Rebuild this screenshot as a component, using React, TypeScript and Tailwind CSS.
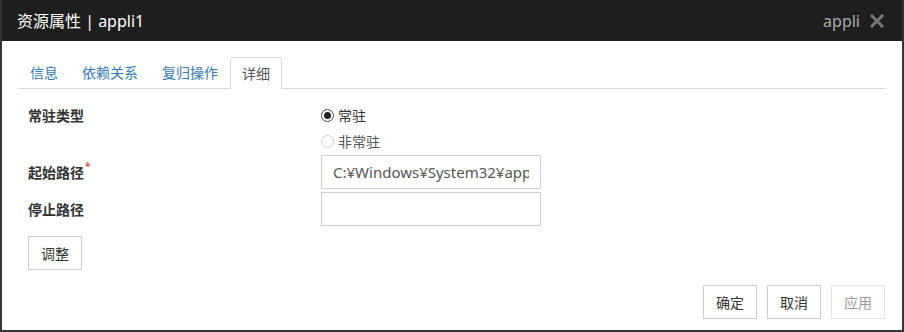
import React from "react";

const App = () => {
  const [mode, setMode] = React.useState<"resident" | "nonresident">("resident");
  const tabs = ["信息", "依赖关系", "复归操作", "详细"];
  const active = 3;

  return (
    <div
      className="w-[904px] h-[332px] border-2 border-t-0 border-[#333] bg-white flex flex-col text-[14px] text-[#333]"
      style={{ fontFamily: '"Noto Sans", "Noto Sans CJK SC", sans-serif' }}
    >
      <div className="h-[41px] bg-[#1e1e1e] flex items-center justify-between pl-[15px] pr-[18px] shrink-0">
        <span className="text-white text-[16px]">资源属性 | appli1</span>
        <div className="flex items-center gap-[10px]">
          <span className="text-[#aaa] text-[16px]">appli</span>
          <svg width="14" height="14" viewBox="0 0 14 14">
            <path d="M2 2 L12 12 M12 2 L2 12" stroke="#777" strokeWidth="3" strokeLinecap="square" />
          </svg>
        </div>
      </div>

      <div className="flex-1 flex flex-col px-[16px] pt-[16px] pb-[11px]">
        <div className="flex border-b border-[#ddd] h-[32px]">
          {tabs.map((t, i) => (
            <div
              key={t}
              className={
                i === active
                  ? "px-[11px] h-[32px] flex items-center border border-[#ddd] border-b-white bg-white text-[#555] rounded-t-[3px]"
                  : "px-[11px] h-[31px] flex items-center border border-transparent text-[#337ab7]"
              }
            >
              {t}
            </div>
          ))}
        </div>

        <div className="pl-[10px] pt-[13px] grid grid-cols-[293px_1fr]">
          <div className="h-[26px] flex items-center font-bold">常驻类型</div>
          <label className="h-[26px] flex items-center gap-[4px] cursor-pointer" onClick={() => setMode("resident")}>
            <span
              className={
                mode === "resident"
                  ? "w-[13px] h-[13px] rounded-full border border-[#444] flex items-center justify-center"
                  : "w-[13px] h-[13px] rounded-full border border-[#ccc]"
              }
            >
              {mode === "resident" && <span className="w-[7px] h-[7px] rounded-full bg-[#222]" />}
            </span>
            <span className={mode === "resident" ? "text-[#333]" : "text-[#555]"}>常驻</span>
          </label>

          <div className="h-[27px]" />
          <label className="h-[27px] flex items-center gap-[4px] cursor-pointer" onClick={() => setMode("nonresident")}>
            <span
              className={
                mode === "nonresident"
                  ? "w-[13px] h-[13px] rounded-full border border-[#444] flex items-center justify-center"
                  : "w-[13px] h-[13px] rounded-full border border-[#ccc]"
              }
            >
              {mode === "nonresident" && <span className="w-[7px] h-[7px] rounded-full bg-[#222]" />}
            </span>
            <span className="text-[#555]">非常驻</span>
          </label>

          <div className="h-[34px] flex items-center font-bold">
            起始路径<span className="text-[#d9534f] text-[10px] self-start mt-[4px] ml-[1px]">*</span>
          </div>
          <input
            className="w-[220px] h-[34px] border border-[#ccc] px-[11px] text-[15px] text-[#555] outline-none"
            defaultValue="C:¥Windows¥System32¥appli.exe"
          />

          <div className="h-[34px] mt-[3px] flex items-center font-bold">停止路径</div>
          <input className="w-[220px] h-[34px] mt-[3px] border border-[#ccc] px-[11px] text-[15px] text-[#555] outline-none" />
        </div>

        <div className="pl-[10px] mt-[10px]">
          <button className="w-[54px] h-[34px] border border-[#ccc] bg-white text-[#333]">调整</button>
        </div>

        <div className="mt-auto flex justify-end gap-[10px] pr-[1px]">
          <button className="w-[54px] h-[34px] border border-[#ccc] bg-white text-[#333]">确定</button>
          <button className="w-[54px] h-[34px] border border-[#ccc] bg-white text-[#333]">取消</button>
          <button className="w-[54px] h-[34px] border border-[#e3e3e3] bg-white text-[#999]">应用</button>
        </div>
      </div>
    </div>
  );
};

export default App;
